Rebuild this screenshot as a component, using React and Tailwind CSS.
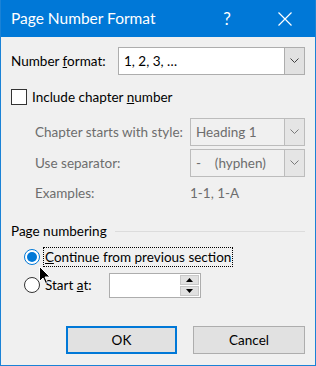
import React from "react";

const Arrow = ({ disabled }) => (
  <svg width="9" height="6" viewBox="0 0 9 6">
    <path d="M0.5 0.5 L4.5 4.5 L8.5 0.5" fill="none" stroke={disabled ? "#7a7a7a" : "#404040"} strokeWidth="1" />
  </svg>
);

function Select({ value, disabled, className }) {
  return (
    <div
      className={
        "flex h-full border " +
        (disabled ? "border-[#bcbcbc] bg-[#f0f0f0] text-[#6d6d6d]" : "border-[#adadad] bg-white text-black") +
        " " + (className || "")
      }
    >
      <div className="flex-1 flex items-center pl-[5px] whitespace-pre">{value}</div>
      <div className={"w-[20px] flex items-center justify-center border-l " + (disabled ? "border-[#bcbcbc] bg-[#e5e5e5]" : "border-[#adadad] bg-[#e1e1e1]")}>
        <Arrow disabled={disabled} />
      </div>
    </div>
  );
}

export default function App() {
  return (
    <div
      className="relative w-[316px] h-[366px] bg-[#f0f0f0] border-x border-b border-[#1a82d6] flex flex-col text-[13.5px] text-black whitespace-nowrap"
      style={{ fontFamily: 'Lato, "Noto Sans", sans-serif' }}
    >
      {/* title bar */}
      <div className="h-[37px] bg-[#0078d7] flex items-center text-white shrink-0">
        <div className="pl-[10px] text-[15.5px] flex-1">Page Number Format</div>
        <div className="w-[46px] text-center text-[17px] mr-[12px]">?</div>
        <div className="w-[46px] flex justify-center mr-[7px]">
          <svg width="14" height="14" viewBox="0 0 14 14">
            <path d="M0.5 0.5 L13.5 13.5 M13.5 0.5 L0.5 13.5" stroke="white" strokeWidth="1.2" />
          </svg>
        </div>
      </div>

      <div className="flex flex-col pl-[10px] pr-[10px]">
        {/* number format */}
        <div className="mt-[10px] h-[28px] flex items-center">
          <div className="w-[107px]">Number <u>f</u>ormat:</div>
          <Select value="1, 2, 3, …" className="flex-1" />
        </div>

        {/* include chapter number */}
        <div className="mt-[14px] h-[16px] flex items-center">
          <div className="w-[16px] h-[16px] border border-[#333] bg-white" />
          <div className="ml-[5px]">Include chapter <u>n</u>umber</div>
        </div>

        {/* chapter starts */}
        <div className="mt-[13px] h-[28px] flex items-center text-[#6d6d6d]">
          <div className="ml-[24px] w-[155px]">Chapter starts with style:</div>
          <Select value="Heading 1" disabled className="flex-1" />
        </div>
        <div className="mt-[3px] h-[28px] flex items-center text-[#6d6d6d]">
          <div className="ml-[24px] w-[155px]">Use separator:</div>
          <Select value={"-    (hyphen)"} disabled className="flex-1" />
        </div>
        <div className="mt-[6px] h-[20px] flex items-center text-[#6d6d6d]">
          <div className="ml-[24px] w-[155px]">Examples:</div>
          <div>1-1, 1-A</div>
        </div>

        {/* page numbering group */}
        <div className="mt-[18px] h-[20px] flex items-center">
          <div>Page numbering</div>
          <div className="flex-1 ml-[8px] h-px bg-[#dcdcdc]" />
        </div>

        {/* radio 1 */}
        <div className="mt-[6px] h-[20px] flex items-center">
          <div className="ml-[13px] w-[16px] h-[16px] rounded-full border border-[#0078d7] bg-white flex items-center justify-center">
            <div className="w-[10px] h-[10px] rounded-full bg-[#0078d7]" />
          </div>
          <div className="ml-[3px] px-[1px] h-[20px] flex items-center border border-dotted border-black">
            <span><u>C</u>ontinue from previous section</span>
          </div>
        </div>

        {/* radio 2 */}
        <div className="mt-[5px] h-[26px] flex items-center">
          <div className="ml-[13px] w-[16px] h-[16px] rounded-full border border-[#333] bg-white" />
          <div className="ml-[5px] w-[64px]">Start <u>a</u>t:</div>
          <div className="w-[92px] h-[25px] border border-[#adadad] bg-white flex justify-end p-px">
            <div className="w-[19px] flex flex-col gap-px">
              <div className="flex-1 bg-[#e1e1e1] border border-[#c8c8c8] flex items-center justify-center">
                <svg width="7" height="4" viewBox="0 0 7 4"><path d="M3.5 0 L7 4 L0 4 Z" fill="black" /></svg>
              </div>
              <div className="flex-1 bg-[#e1e1e1] border border-[#c8c8c8] flex items-center justify-center">
                <svg width="7" height="4" viewBox="0 0 7 4"><path d="M0 0 L7 0 L3.5 4 Z" fill="black" /></svg>
              </div>
            </div>
          </div>
        </div>

        {/* buttons */}
        <div className="mt-[28px] flex justify-end gap-[16px]">
          <button className="w-[111px] h-[28px] bg-[#e1e1e1] border-2 border-[#0078d7] text-black">OK</button>
          <button className="w-[112px] h-[28px] bg-[#e1e1e1] border border-[#adadad] text-black">Cancel</button>
        </div>
      </div>

      {/* mouse cursor */}
      <svg className="absolute left-[38px] top-[266px]" width="12" height="19" viewBox="0 0 12 19">
        <path d="M0.5 0.5 L0.5 15.5 L4 12 L6.5 17.5 L8.5 16.5 L6 11 L11 11 Z" fill="black" stroke="white" strokeWidth="1" />
      </svg>
    </div>
  );
}
